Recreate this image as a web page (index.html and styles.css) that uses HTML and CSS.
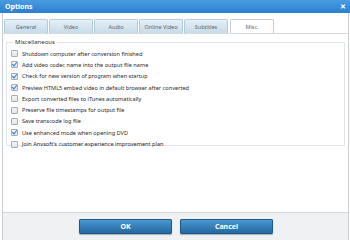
FILE: index.html
```html
<!DOCTYPE html>
<html lang="en">
<head>
  <meta charset="UTF-8">
  <title>Options</title>
  <link rel="stylesheet" href="styles.css">
</head>
<body>
  <div class="window">
    <div class="titlebar">
      <span class="title">Options</span>
      <span class="close">&#x2715;</span>
    </div>
    <div class="main">
      <div class="tabs">
        <span class="tab">General</span>
        <span class="tab">Video</span>
        <span class="tab">Audio</span>
        <span class="tab">Online Video</span>
        <span class="tab">Subtitles</span>
        <span class="tab active">Misc.</span>
      </div>
      <div class="panel">
        <fieldset class="group">
          <legend>Miscellaneous</legend>
          <div class="row"><span class="box"></span>Shutdown computer after conversion finished</div>
          <div class="row"><span class="box checked"></span>Add video codec name into the output file name</div>
          <div class="row"><span class="box checked"></span>Check for new version of program when startup</div>
          <div class="row"><span class="box checked"></span>Preview HTML5 embed video in default browser after converted</div>
          <div class="row"><span class="box"></span>Export converted files to iTunes automatically</div>
          <div class="row"><span class="box"></span>Preserve file timestamps for output file</div>
          <div class="row"><span class="box"></span>Save transcode log file</div>
          <div class="row"><span class="box checked"></span>Use enhanced mode when opening DVD</div>
          <div class="row"><span class="box"></span>Join Anvsoft's customer experience improvement plan</div>
        </fieldset>
      </div>
    </div>
    <div class="footer">
      <button type="button" class="btn">OK</button>
      <button type="button" class="btn">Cancel</button>
    </div>
  </div>
</body>
</html>
```

FILE: styles.css
```css
body {
  margin: 0;
  font-family: "Noto Sans", "Open Sans", sans-serif;
  background: #ffffff;
}
.window {
  width: 350px;
  height: 240px;
  display: flex;
  flex-direction: column;
}
.titlebar {
  height: 13px;
  background: linear-gradient(#4a9be0, #2a7fd0);
  display: flex;
  align-items: center;
  justify-content: space-between;
  padding: 0 4px 0 5px;
  color: #ffffff;
}
.title {
  font-size: 7px;
  font-weight: bold;
}
.close {
  font-size: 7px;
  font-weight: bold;
}
.main {
  flex: 1;
  display: flex;
  flex-direction: column;
  border-left: 1px solid #c9cdd2;
  border-right: 1px solid #c9cdd2;
  margin: 0 1px 0 2px;
}
.tabs {
  display: flex;
  gap: 1px;
  padding: 6px 0 0 1px;
  height: 14px;
}
.tab {
  width: 44px;
  height: 14px;
  box-sizing: border-box;
  border: 1px solid #b3cad9;
  border-bottom: none;
  border-radius: 2px 2px 0 0;
  background: linear-gradient(#e6f0f7, #c7dbe9);
  color: #5a6670;
  font-size: 5.5px;
  display: flex;
  align-items: center;
  justify-content: center;
}
.tab.active {
  background: #ffffff;
  border-color: #c5ccd2;
  height: 15px;
  margin-left: 1px;
}
.panel {
  flex: 1;
  border-top: 1px solid #d5dbe0;
  padding: 4px 3px 0 3px;
}
.group {
  margin: 0;
  padding: 2px 0 0 4px;
  border: 1px solid #e2e5e8;
  height: 108px;
  box-sizing: border-box;
}
.group legend {
  font-size: 6px;
  color: #333;
  padding: 0 2px;
  margin-left: 2px;
}
.row {
  height: 11.3px;
  display: flex;
  align-items: center;
  font-size: 5.6px;
  color: #2a2a2a;
}
.box {
  width: 5px;
  height: 5px;
  border: 1px solid #a8adb2;
  border-radius: 1px;
  background: linear-gradient(#f4f5f6, #e2e4e6);
  margin-right: 4px;
  position: relative;
}
.box.checked::after {
  content: "";
  position: absolute;
  left: 1px;
  top: -1px;
  width: 2px;
  height: 4px;
  border: solid #2f7fce;
  border-width: 0 1.5px 1.5px 0;
  transform: rotate(40deg);
}
.footer {
  height: 27px;
  background: #f0f1f3;
  border-top: 1px solid #d3d6da;
  border-left: 1px solid #c9cdd2;
  border-right: 1px solid #c9cdd2;
  margin: 0 1px 0 2px;
  display: flex;
  justify-content: center;
  align-items: center;
  gap: 8px;
  padding-left: 1px;
}
.btn {
  width: 93px;
  height: 15px;
  border: 1px solid #1d5a8a;
  border-radius: 1px;
  background: linear-gradient(#4b97cf, #2369a3);
  color: #ffffff;
  font-family: "Noto Sans", sans-serif;
  font-size: 7px;
  font-weight: bold;
  padding: 0;
  box-shadow: 0 1px 1px rgba(0, 0, 0, 0.3);
}
```
